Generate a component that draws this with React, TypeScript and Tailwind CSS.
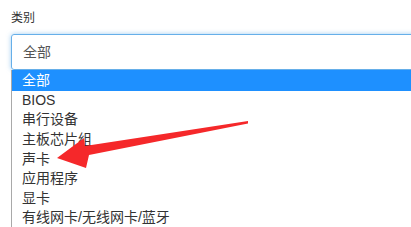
import React from 'react';

const options = ['全部', 'BIOS', '串行设备', '主板芯片组', '声卡', '应用程序', '显卡', '有线网卡/无线网卡/蓝牙'];

export default function App() {
    return (
        <div
            className="relative h-[227px] w-[411px] overflow-hidden bg-white"
            style={{ fontFamily: '"Liberation Sans", "Noto Sans CJK SC", sans-serif' }}
        >
            <div className="pl-[11px] pt-[10px]">
                {/* Label */}
                <label className="block h-[16px] text-[12px] leading-[16px] text-[#333]">类别</label>

                {/* Select box (focused) */}
                <div className="mt-[8px] flex h-[36px] w-[430px] items-center rounded-[3px] border border-[#66afe9] pl-[11px] text-[14px] text-[#555] shadow-[0_0_5px_rgba(102,175,233,0.6)]">
                    全部
                </div>

                {/* Open dropdown */}
                <div className="w-[430px] border-l border-[#a9a9a9] bg-white">
                    {options.map((opt, i) => (
                        <div
                            key={opt}
                            className={
                                i === 0
                                    ? 'flex h-[20.5px] items-center bg-[#1e90ff] pl-[10px] text-[14px] text-white'
                                    : 'flex h-[19.6px] items-center pl-[10px] text-[14px] text-[#333]'
                            }
                        >
                            {opt}
                        </div>
                    ))}
                </div>
            </div>

            {/* Red annotation arrow */}
            <svg className="absolute left-0 top-0" width="411" height="227" viewBox="0 0 411 227">
                <polygon
                    points="57,158 84,138 85,146 248,121 248,123.5 89,155 86,168"
                    fill="#f5282a"
                />
            </svg>
        </div>
    );
}
